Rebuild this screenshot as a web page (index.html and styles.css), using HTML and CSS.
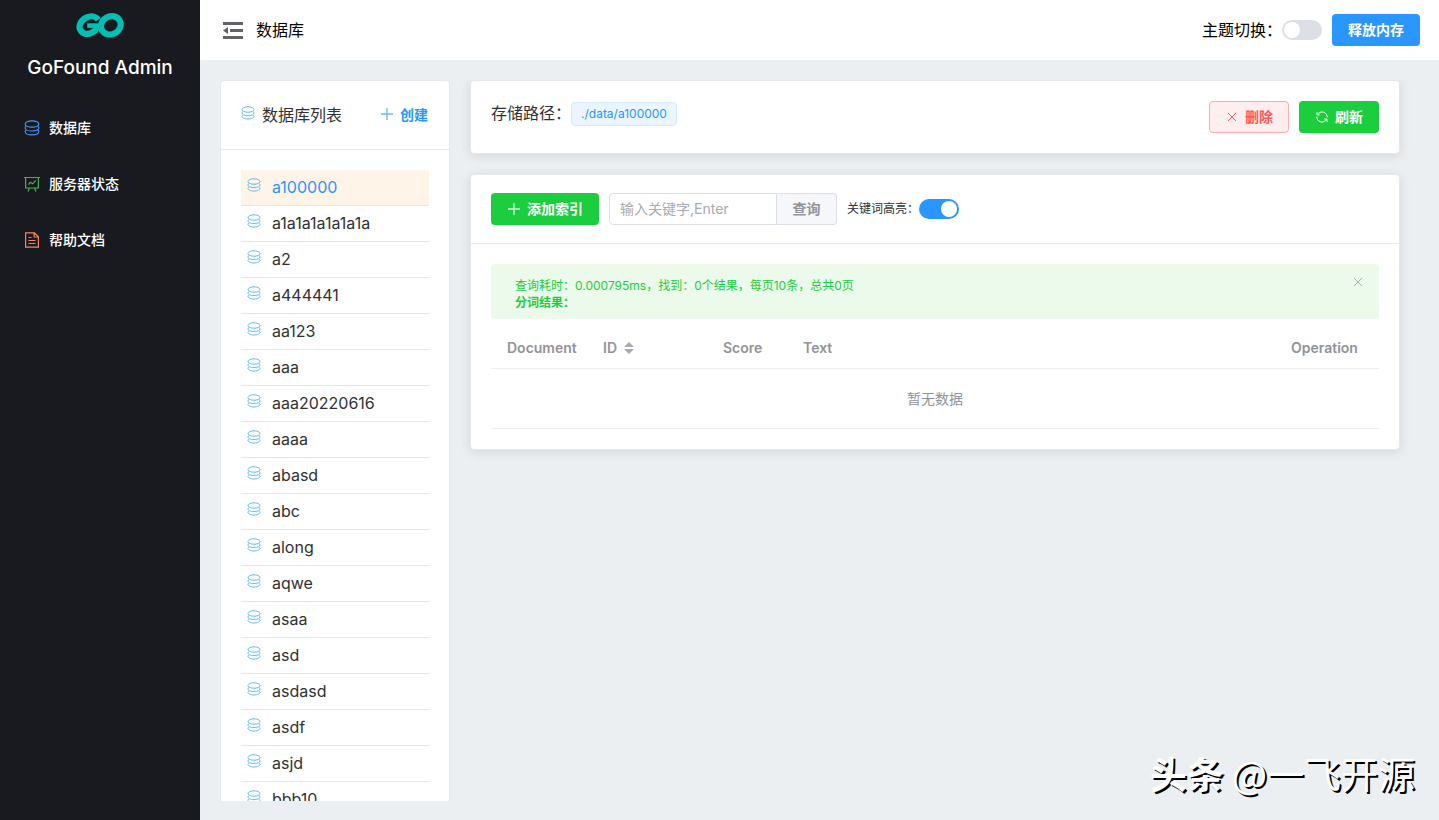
FILE: index.html
```html
<!DOCTYPE html>
<html lang="zh-CN">
<head>
<meta charset="utf-8">
<title>GoFound Admin</title>
<link rel="stylesheet" href="styles.css">
</head>
<body>
<svg class="sprite" aria-hidden="true">
  <symbol id="db" viewBox="0 0 16 16"><g fill="none" stroke="currentColor" stroke-width="1.1"><ellipse cx="8" cy="4" rx="6.9" ry="3.1"/><path d="M2.200 6.300C1.500 6.800 1.100 7.300 1.100 7.900c0 1.700 3 3.100 6.900 3.100s6.900-1.400 6.900-3.100c0-.6-.4-1.100-1.100-1.600M2.200 10.200c-.7.5-1.100 1-1.100 1.600C1.100 13.500 4.100 14.900 8 14.900s6.900-1.400 6.900-3.100c0-.6-.4-1.100-1.100-1.600"/></g></symbol>
  <symbol id="plus" viewBox="0 0 14 14"><path d="M7 1v12M1 7h12" fill="none" stroke="currentColor" stroke-width="1.3"/></symbol>
  <symbol id="close" viewBox="0 0 14 14"><path d="M3 3l8 8M11 3l-8 8" fill="none" stroke="currentColor"/></symbol>
</svg>
<div class="app">
  <aside class="sidebar">
    <svg class="logo" viewBox="0 0 48 25" role="img" aria-label="Go"><g fill="none" stroke="#00bfb3" stroke-width="6.2"><ellipse cx="34.800" cy="12.300" rx="10.100" ry="8.900" transform="rotate(-28 34.800 12.300)"/><path d="M22.300 6.900C20 3.300 15 2.300 10.300 4.600C4.800 7.300 2.300 12.600 4.100 16.600C6 20.800 11.500 22.200 16.300 19.600C19 18.200 20.600 15.800 21.400 13"/><path d="M11.200 12.600H24" stroke-width="4.600"/></g></svg>
    <h1 class="brand">GoFound Admin</h1>
    <nav class="menu">
      <a class="menu-item" href="#db"><svg class="icon16 blue"><use href="#db"/></svg>数据库</a>
      <a class="menu-item" href="#status"><svg class="icon16 green" viewBox="0 0 16 16"><g fill="none" stroke="currentColor" stroke-width="1.2"><path d="M0 1.500h16M1.600 1.500v10.500h12.800v-10.500M5.500 12l-1.500 3.500M10.500 12l1.500 3.500M4.500 8.500l2-2.200 2.200 1.500L11.800 4.500"/></g></svg>服务器状态</a>
      <a class="menu-item" href="#docs"><svg class="icon16 orange" viewBox="0 0 16 16"><g fill="none" stroke="currentColor" stroke-width="1.200"><path d="M1.600.8h8.800l4 4v10.400H1.600zM10.200 1v4h4M4.500 5.500h3M4.500 8.500h7M4.500 11.500h7"/></g></svg>帮助文档</a>
    </nav>
  </aside>
  <div class="page">
    <header class="topbar">
      <button class="fold" type="button" aria-label="折叠菜单"><svg viewBox="0 0 20 17"><path d="M0 0h20v3H0zM7 7h13v3H7zM0 14h20v3H0zM0 8.500L5 5v7z" fill="#606266"/></svg></button>
      <span class="crumb">数据库</span>
      <label class="theme" for="theme">主题切换：</label>
      <input class="switch" id="theme" type="checkbox">
      <button class="btn primary" type="button">释放内存</button>
    </header>
    <main class="main">
      <section class="card dbs">
        <div class="card-head">
          <svg class="icon14 sky raise"><use href="#db"/></svg><h2 class="title">数据库列表</h2>
          <button class="create" type="button"><svg class="icon14"><use href="#plus"/></svg>创建</button>
        </div>
        <ul class="list">
          <li class="row active"><svg class="icon14 sky raise"><use href="#db"/></svg>a100000</li>
          <li class="row"><svg class="icon14 sky raise"><use href="#db"/></svg>a1a1a1a1a1a1a</li>
          <li class="row"><svg class="icon14 sky raise"><use href="#db"/></svg>a2</li>
          <li class="row"><svg class="icon14 sky raise"><use href="#db"/></svg>a444441</li>
          <li class="row"><svg class="icon14 sky raise"><use href="#db"/></svg>aa123</li>
          <li class="row"><svg class="icon14 sky raise"><use href="#db"/></svg>aaa</li>
          <li class="row"><svg class="icon14 sky raise"><use href="#db"/></svg>aaa20220616</li>
          <li class="row"><svg class="icon14 sky raise"><use href="#db"/></svg>aaaa</li>
          <li class="row"><svg class="icon14 sky raise"><use href="#db"/></svg>abasd</li>
          <li class="row"><svg class="icon14 sky raise"><use href="#db"/></svg>abc</li>
          <li class="row"><svg class="icon14 sky raise"><use href="#db"/></svg>along</li>
          <li class="row"><svg class="icon14 sky raise"><use href="#db"/></svg>aqwe</li>
          <li class="row"><svg class="icon14 sky raise"><use href="#db"/></svg>asaa</li>
          <li class="row"><svg class="icon14 sky raise"><use href="#db"/></svg>asd</li>
          <li class="row"><svg class="icon14 sky raise"><use href="#db"/></svg>asdasd</li>
          <li class="row"><svg class="icon14 sky raise"><use href="#db"/></svg>asdf</li>
          <li class="row"><svg class="icon14 sky raise"><use href="#db"/></svg>asjd</li>
          <li class="row"><svg class="icon14 sky raise"><use href="#db"/></svg>bbb10</li>
        </ul>
      </section>
      <div class="content">
        <section class="card shadow path-card">
          <div class="path">存储路径：<span class="tag">./data/a100000</span></div>
          <button class="btn danger" type="button"><svg class="icon14"><use href="#close"/></svg>删除</button>
          <button class="btn success" type="button"><svg class="icon14" viewBox="0 0 14 14"><path d="M2 2.200v2.700h2.700M2.400 4.700C4 2.200 6.500 1.500 8.800 2.300c2.300.8 3.600 3 3.400 5.200M12 11.800V9.100H9.300M11.600 9.300C10 11.800 7.500 12.500 5.200 11.700 2.900 10.900 1.600 8.700 1.800 6.500" fill="none" stroke="currentColor"/></svg>刷新</button>
        </section>
        <section class="card shadow">
          <div class="card-head tools">
            <button class="btn success" type="button"><svg class="icon14 faint"><use href="#plus"/></svg>添加索引</button>
            <form class="search"><input class="query" type="text" aria-label="关键字" placeholder="输入关键字,Enter"><button class="go" type="button">查询</button></form>
            <div class="highlight"><label for="hl">关键词高亮：</label><input class="switch" id="hl" type="checkbox" checked></div>
          </div>
          <div class="card-body">
            <div class="alert" role="status">
              <div class="alert-text">查询耗时：0.000795ms，找到：0个结果，每页10条，总共0页<br><strong>分词结果：</strong></div>
              <button class="alert-close" type="button" aria-label="关闭"><svg class="icon14"><use href="#close"/></svg></button>
            </div>
            <table class="table">
              <colgroup><col class="c-doc"><col class="c-id"><col class="c-score"><col><col class="c-op"></colgroup>
              <thead><tr><th>Document</th><th><span class="sort">ID<svg viewBox="0 0 10 12"><path d="M0 5l5-5 5 5zM0 7l5 5 5-5z" fill="#a8abb2"/></svg></span></th><th>Score</th><th>Text</th><th>Operation</th></tr></thead>
              <tbody><tr><td colspan="5">暂无数据</td></tr></tbody>
            </table>
          </div>
        </section>
      </div>
    </main>
  </div>
</div>
<div class="watermark"><span class="heavy">头条</span> @一飞开源</div>
</body>
</html>
```

FILE: styles.css
```css
* { box-sizing: border-box; }
body {
  margin: 0;
  font: 16px/24px Inter, "Noto Sans CJK SC", sans-serif;
  color: #303133;
  background: #ebeff2;
}
button, input { font-family: inherit; margin: 0; }
button { cursor: pointer; }
.sprite { position: absolute; width: 0; height: 0; }
.app { display: flex; height: 100vh; }

.sidebar { width: 200px; flex: none; background: #191a20; color: #fff; }
.logo { display: block; width: 48px; height: 25px; margin: 13px auto 18px; }
.brand { margin: 0 0 20px; font-size: 19px; line-height: 24px; font-weight: 500; text-align: center; }
.menu-item { display: flex; align-items: center; gap: 9px; height: 56px; padding-left: 24px; color: #fff; font-size: 14px; font-weight: 500; text-decoration: none; }
.icon16 { width: 16px; height: 16px; flex: none; }
.icon14 { width: 14px; height: 14px; flex: none; }
.blue { color: #409eff; }
.green { color: #4caf50; }
.orange { color: #f5855a; }
.sky { color: #52b8fa; }
.raise { margin-bottom: 4px; }
.faint { opacity: .8; }

.page { flex: 1; min-width: 0; display: flex; flex-direction: column; }
.topbar { display: flex; align-items: center; height: 60px; padding: 0 19px 0 23px; background: #fff; color: #000; }
.fold { border: 0; padding: 0; background: none; width: 20px; height: 17px; margin-right: 13px; }
.fold svg { display: block; width: 20px; height: 17px; }
.theme { margin-left: auto; }
.topbar .btn { margin-left: 10px; }

.switch {
  appearance: none;
  width: 40px;
  height: 20px;
  padding: 2px;
  border-radius: 10px;
  background: #dcdfe6;
  display: flex;
}
.switch::before { content: ""; width: 16px; height: 16px; border-radius: 50%; background: #fff; }
.switch:checked { background: #2a96ff; justify-content: flex-end; }

.btn { display: inline-flex; align-items: center; justify-content: center; gap: 6px; height: 32px; padding: 0 15px 2px; border: 1px solid transparent; border-radius: 4px; font-size: 14px; font-weight: 700; color: #fff; }
.btn .icon14 { margin-top: 2px; }
.primary { background: #2a96ff; }
.success { background: #1bce3e; }
.danger { background: #ffeeee; border-color: #ffaaad; color: #ff555b; }

.main { flex: 1; min-height: 0; display: flex; padding: 20px 20px 19px; }
.card { background: #fff; border: 1px solid #e4e7ed; border-radius: 4px; }
.card-head { display: flex; align-items: center; height: 69px; padding: 0 20px; border-bottom: 1px solid #e4e7ed; }
.card-body { padding: 20px; }
.shadow { box-shadow: 0 2px 12px rgba(0, 0, 0, .1); }
.dbs { width: 230px; flex: none; overflow: hidden; border-bottom: 0; border-radius: 4px 4px 0 0; }
.title { margin: 0 0 0 7px; font-size: 16px; line-height: 24px; font-weight: 400; }
.create { display: flex; align-items: center; gap: 6px; margin-left: auto; padding: 0 1px 2px 0; border: 0; background: none; font-size: 14px; font-weight: 700; color: #2a96ff; }
.create .icon14 { opacity: .7; }
.list { list-style: none; margin: 0; padding: 20px; }
.row { display: flex; align-items: center; gap: 11px; height: 36px; padding: 0 0 2px 6px; border-bottom: 1px solid #e4e7ed; }
.active { background: #fff4e8; color: #2a96ff; }

.content { flex: 1; min-width: 0; display: flex; flex-direction: column; gap: 20px; padding: 0 19px 0 20px; overflow: hidden; }
.path-card { display: flex; gap: 10px; padding: 20px; }
.path { display: flex; align-items: flex-start; flex: 1; }
.tag { height: 24px; padding: 0 9px; margin-top: 1px; border: 1px solid #d4eaff; border-radius: 4px; background: #eaf5ff; color: #2a96ff; font-size: 12px; line-height: 22px; }
.tools { gap: 10px; }
.search { display: flex; width: 228px; height: 32px; }
.query { flex: 1; min-width: 0; padding: 0 10px 2px; border: 1px solid #dcdfe6; border-radius: 4px 0 0 4px; font-size: 14px; color: #606266; }
.query::placeholder { color: #a8abb2; }
.go { width: 60px; padding: 0 0 2px; border: 1px solid #dcdfe6; border-left: 0; border-radius: 0 4px 4px 0; background: #f5f7fa; color: #909399; font-size: 14px; font-weight: 700; }
.highlight { display: flex; align-items: center; font-size: 12px; }
.alert { display: flex; align-items: flex-start; justify-content: space-between; margin-bottom: 10px; padding: 13px 14px 8px 24px; border-radius: 4px; background: #ebfaea; color: #1bce3e; font-size: 12px; line-height: 17px; }
.alert-close { margin-top: -2px; padding: 0; border: 0; background: none; color: #a8abb2; line-height: 0; }
.table { width: 100%; border-collapse: separate; border-spacing: 0; table-layout: fixed; font-size: 14px; color: #909399; }
.table th { height: 40px; padding: 0 16px 2px; text-align: left; font-weight: 600; border-bottom: 1px solid #ebeef5; }
.table td { height: 60px; padding: 0; text-align: center; border-bottom: 1px solid #ebeef5; }
.c-doc { width: 96px; }
.c-id { width: 120px; }
.c-score { width: 80px; }
.c-op { width: 104px; }
.sort { display: flex; align-items: center; gap: 7px; }
.sort svg { width: 10px; height: 12px; }

.watermark { position: absolute; right: 24px; bottom: 20px; font: 37px/54px "Noto Sans CJK SC", sans-serif; color: #fff; text-shadow: 2px 2px 0 #000; white-space: nowrap; }
.heavy { font-weight: 700; }
```
